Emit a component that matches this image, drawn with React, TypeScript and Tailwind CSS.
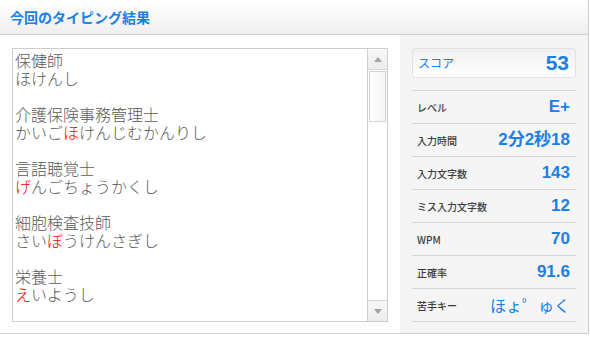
import React from "react";

// typing result panel: answer log on the left, stats on the right
const jp = "font-['Noto_Sans_CJK_JP','Noto_Sans',sans-serif]";

type Seg = { t: string; miss?: boolean };

const lines: Seg[][] = [
  [{ t: "保健師" }],
  [{ t: "ほけんし" }],
  [],
  [{ t: "介護保険事務管理士" }],
  [{ t: "かいご" }, { t: "ほ", miss: true }, { t: "けんじむかんりし" }],
  [],
  [{ t: "言語聴覚士" }],
  [{ t: "げ", miss: true }, { t: "んごちょうかくし" }],
  [],
  [{ t: "細胞検査技師" }],
  [{ t: "さい" }, { t: "ぼ", miss: true }, { t: "うけんさぎし" }],
  [],
  [{ t: "栄養士" }],
  [{ t: "え", miss: true }, { t: "いようし" }],
];

const stats = [
  { label: "レベル", value: "E+" },
  { label: "入力時間", value: "2分2秒18" },
  { label: "入力文字数", value: "143" },
  { label: "ミス入力文字数", value: "12" },
  { label: "WPM", value: "70" },
  { label: "正確率", value: "91.6" },
];

function Arrow({ up }: { up?: boolean }) {
  return (
    <svg width="8" height="5" viewBox="0 0 8 5">
      <polygon points={up ? "0,5 8,5 4,0" : "0,0 8,0 4,5"} fill="#a3a3a3" />
    </svg>
  );
}

function ScrollBar() {
  return (
    <div className="flex w-[20px] shrink-0 flex-col border-l border-[#cfcfcf] bg-white">
      <div className="flex h-[21px] items-center justify-center border-b border-[#d4d4d4] bg-gradient-to-b from-[#f8f8f8] to-[#ececec]">
        <Arrow up />
      </div>
      <div className="mx-[1px] mt-[1px] h-[51px] border border-[#d4d4d4] bg-gradient-to-r from-white to-[#f4f4f4]" />
      <div className="flex-1" />
      <div className="flex h-[21px] items-center justify-center border-t border-[#d4d4d4] bg-gradient-to-b from-[#f8f8f8] to-[#ececec]">
        <Arrow />
      </div>
    </div>
  );
}

export default function App() {
  return (
    <div className={`h-[334px] w-[589px] border-r border-b border-[#d0d0d0] bg-white ${jp}`}>
      <div className="flex h-[35px] items-center border-b border-[#d0d0d0] bg-gradient-to-b from-white to-[#efefef] pl-[10px]">
        <h2 className="text-[14px] font-bold text-[#1a7fe6]">今回のタイピング結果</h2>
      </div>

      <div className="flex h-[298px]">
        {/* answer log */}
        <div className="w-[400px] pt-[13px] pl-[12px]">
          <div className="flex h-[274px] w-[376px] border border-[#cdcdcd] bg-white">
            <div className="flex-1 overflow-hidden pt-[2px] pl-[2px] text-[16px] leading-[18px] font-light text-[#5a5a5a]">
              {lines.map((segs, i) => (
                <div key={i} className="flex h-[18px] whitespace-nowrap">
                  {segs.map((s, j) => (
                    <span
                      key={j}
                      className={`block h-[18px] overflow-visible ${s.miss ? "text-[#ff0000]" : ""}`}
                    >
                      {s.t}
                    </span>
                  ))}
                </div>
              ))}
            </div>
            <ScrollBar />
          </div>
        </div>

        {/* stats */}
        <div className="flex-1 bg-[#f5f5f5] px-[12px] pt-[13px]">
          <div className="flex h-[30px] items-center justify-between rounded-[3px] border border-[#e2e2e2] bg-gradient-to-b from-[#f1f1f1] to-white pr-[6px] pl-[5px]">
            <span className="text-[12px] text-[#1a7fe6]">スコア</span>
            <span className="font-['Liberation_Sans',sans-serif] text-[21px] font-bold text-[#1a7fe6]">53</span>
          </div>

          <div className="mt-[12px] border-t border-[#d6d6d6]">
            {stats.map((s) => (
              <div
                key={s.label}
                className="flex h-[33px] items-center justify-between border-b border-[#d6d6d6] pr-[6px] pl-[5px]"
              >
                <span className="text-[10px] font-medium text-[#3c3c3c]">{s.label}</span>
                <span className="font-['Liberation_Sans','Noto_Sans_CJK_JP',sans-serif] text-[17px] font-bold text-[#1a7fe6]">
                  {s.value}
                </span>
              </div>
            ))}
            <div className="flex h-[33px] items-center justify-between border-b border-[#d6d6d6] pr-[6px] pl-[5px]">
              <span className="text-[10px] font-medium text-[#3c3c3c]">苦手キー</span>
              <span className="text-[16px] text-[#1a7fe6]">ほょ゜ゅく</span>
            </div>
          </div>
        </div>
      </div>
    </div>
  );
}
